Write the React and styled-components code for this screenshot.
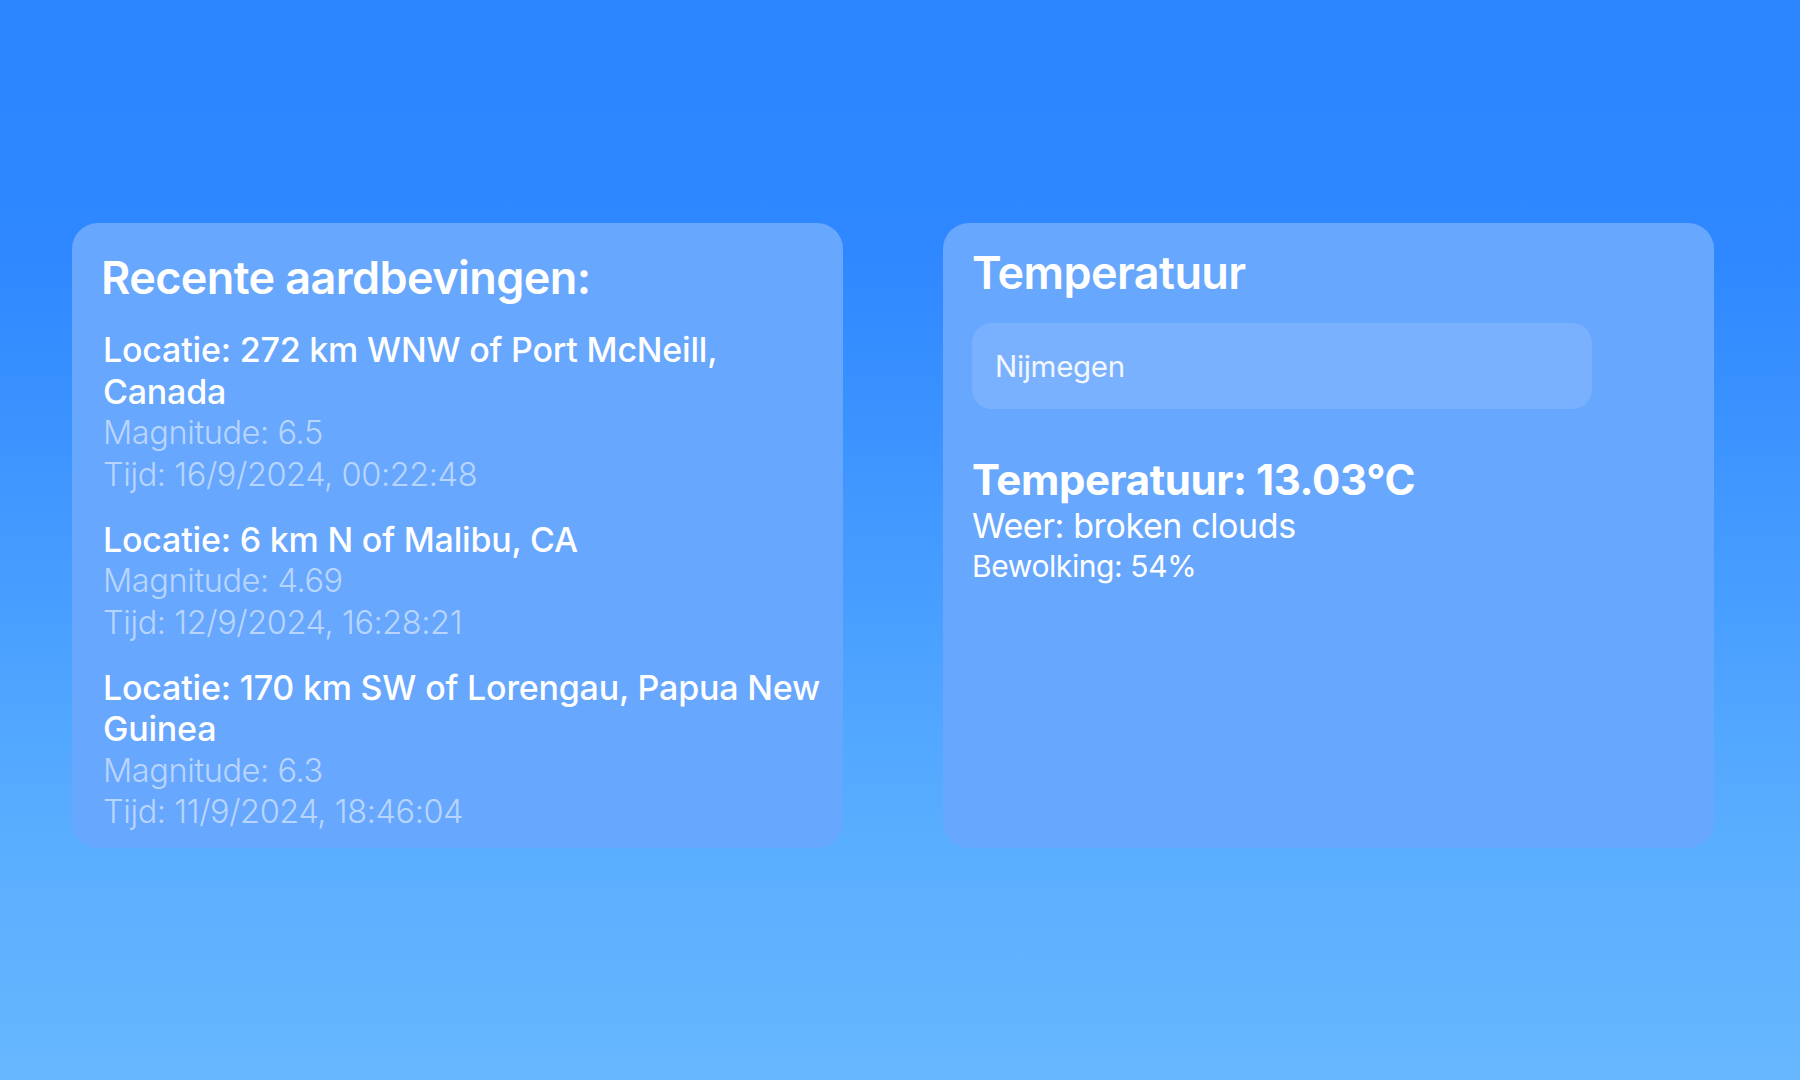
import React from 'react';
import styled, { createGlobalStyle } from 'styled-components';

const GlobalStyle = createGlobalStyle`
  html, body {
    margin: 0;
    padding: 0;
  }
  body {
    font-family: 'Inter', 'Helvetica Neue', Arial, sans-serif;
    background: linear-gradient(180deg, #2a85ff 0%, #2f88ff 24%, #5aaeff 78%, #66b7ff 100%);
    min-height: 1080px;
    color: #fff;
  }
`;

const Page = styled.div`
  min-height: 1080px;
  padding: 223px 0 0 72px;
  box-sizing: border-box;
  display: grid;
  grid-template-columns: 771px 771px;
  grid-template-rows: 625px;
  column-gap: 100px;
`;

const Card = styled.section`
  background: #68a7fe;
  border-radius: 26px;
  padding: ${(p) => p.$padding};
  box-sizing: border-box;
  display: flex;
  flex-direction: column;
`;

const CardTitle = styled.h2`
  margin: 0 0 ${(p) => p.$gap}px;
  font-size: 45px;
  line-height: 48px;
  font-weight: 600;
  letter-spacing: -0.6px;
  color: #fff;
`;

const QuakeList = styled.div`
  display: flex;
  flex-direction: column;
  gap: 23.5px;
`;

const Quake = styled.div`
  display: flex;
  flex-direction: column;
`;

const QuakeLine = styled.div`
  padding-left: 2px;
  font-size: ${(p) => (p.$strong ? 34 : 32.5)}px;
  line-height: 41.5px;
  font-weight: ${(p) => (p.$strong ? 500 : 300)};
  letter-spacing: ${(p) => (p.$strong ? -0.2 : -0.4)}px;
  color: ${(p) => (p.$strong ? '#ffffff' : 'rgba(255, 255, 255, 0.55)')};
`;

const CityInput = styled.input`
  width: 620px;
  height: 86px;
  box-sizing: border-box;
  border: none;
  outline: none;
  border-radius: 20px;
  background: rgba(255, 255, 255, 0.12);
  padding: 0 23px;
  font-family: inherit;
  font-size: 29.5px;
  letter-spacing: -0.3px;
  color: #f2f7ff;
`;

const Result = styled.div`
  margin-top: 47px;
  display: flex;
  flex-direction: column;
`;

const ResultLine = styled.div`
  font-size: ${(p) => p.$size}px;
  line-height: ${(p) => p.$lh}px;
  font-weight: ${(p) => p.$weight || 400};
  letter-spacing: -0.4px;
  color: #fff;
`;

const quakes = [
  { place: '272 km WNW of Port McNeill, Canada', mag: '6.5', time: '16/9/2024, 00:22:48' },
  { place: '6 km N of Malibu, CA', mag: '4.69', time: '12/9/2024, 16:28:21' },
  { place: '170 km SW of Lorengau, Papua New Guinea', mag: '6.3', time: '11/9/2024, 18:46:04' },
];

export default function App() {
  return (
    <>
      <GlobalStyle />
      <Page>
        <Card $padding="31px 20px 14px 29px">
          <CardTitle $gap={27}>Recente aardbevingen:</CardTitle>
          <QuakeList>
            {quakes.map((q, i) => (
              <Quake key={i}>
                <QuakeLine $strong>Locatie: {q.place}</QuakeLine>
                <QuakeLine>Magnitude: {q.mag}</QuakeLine>
                <QuakeLine>Tijd: {q.time}</QuakeLine>
              </Quake>
            ))}
          </QuakeList>
        </Card>
        <Card $padding="26px 29px 14px">
          <CardTitle $gap={26}>Temperatuur</CardTitle>
          <CityInput defaultValue="Nijmegen" />
          <Result>
            <ResultLine $size={42} $lh={48} $weight={700}>Temperatuur: 13.03°C</ResultLine>
            <ResultLine $size={34} $lh={44}>Weer: broken clouds</ResultLine>
            <ResultLine $size={30} $lh={36}>Bewolking: 54%</ResultLine>
          </Result>
        </Card>
      </Page>
    </>
  );
}
